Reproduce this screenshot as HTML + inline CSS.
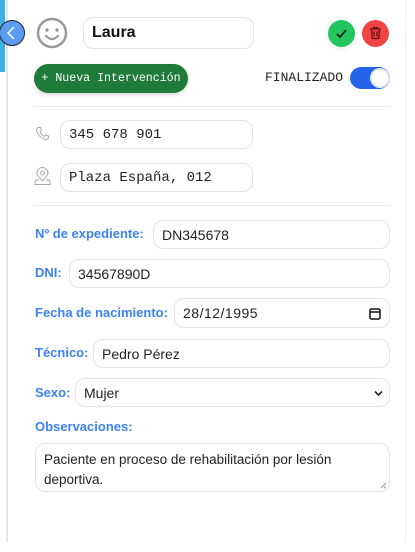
<!DOCTYPE html>
<html><head><meta charset="utf-8"><style>
*{box-sizing:border-box;margin:0;padding:0}
body{width:415px;height:552px;background:#fff;position:relative;overflow:hidden;font-family:"Liberation Sans",sans-serif}
.strip{position:absolute;left:0;top:0;width:5px;height:72px;background:#3fb0e8}
.panel{position:absolute;left:6px;top:0;width:400px;height:542px;border-left:2px solid #e6e6ea;border-right:1px solid #f0f0f3;background:#fff}
.abs{position:absolute}
.inp{position:absolute;border:1.5px solid #e3e3ea;border-radius:10px;background:#fff;font-size:14px;color:#222;padding-left:8px;display:flex;align-items:center}
.mono{font-family:"Liberation Mono",monospace}
.lbl{position:absolute;color:#3b82f6;font-weight:bold;font-size:13px;left:35px}
hr{position:absolute;left:34px;width:356px;border:0;border-top:1px solid #e5e5ea}
</style></head><body>
<div class="strip"></div>
<div class="panel"></div>
<div class="abs" style="left:-1px;top:20px;width:26px;height:26px;border-radius:50%;background:#5b9cf2;border:1.5px solid #222"></div>
<svg class="abs" style="left:4px;top:25px" width="14" height="16"><path d="M10 2 L4 8 L10 14" fill="none" stroke="#fff" stroke-width="1.5"/></svg>
<svg class="abs" style="left:36px;top:17px" width="32" height="32"><circle cx="16" cy="16" r="14" fill="none" stroke="#999" stroke-width="2.5"/><circle cx="11" cy="13" r="1.7" fill="#999"/><circle cx="21" cy="13" r="1.7" fill="#999"/><path d="M10 19 Q16 25 22 19" fill="none" stroke="#999" stroke-width="2.2" stroke-linecap="round"/></svg>
<div class="inp" style="left:83px;top:17px;width:171px;height:32px;font-weight:bold;font-size:16px;color:#111">Laura</div>
<div class="abs" style="left:328px;top:20px;width:27px;height:27px;border-radius:50%;background:#22c55e;box-shadow:0 2px 6px rgba(0,0,0,.08)"></div>
<svg class="abs" style="left:335px;top:27px" width="13" height="13"><path d="M2 7 L5 10 L11 3" fill="none" stroke="#111" stroke-width="1.6"/></svg>
<div class="abs" style="left:362px;top:20px;width:27px;height:27px;border-radius:50%;background:#ef4444"></div>
<svg class="abs" style="left:369px;top:26px" width="13" height="14"><path d="M1 3h11M4.5 3V1.5h4V3M2.5 3l.8 9.5h6.4l.8-9.5M5 5.5v5M8 5.5v5" fill="none" stroke="#6b1010" stroke-width="1.3"/></svg>
<div class="abs mono" style="left:34px;top:64px;width:154px;height:29px;border-radius:15px;background:#1e7b3a;color:#fff;font-size:11.6px;display:flex;align-items:center;justify-content:center;box-shadow:0 2px 5px rgba(0,0,0,.15);white-space:nowrap">+ Nueva Intervención</div>
<div class="abs mono" style="left:265px;top:70px;font-size:13px;color:#222">FINALIZADO</div>
<div class="abs" style="left:350px;top:67px;width:40px;height:22px;border-radius:11px;background:#2563eb"></div>
<div class="abs" style="left:370px;top:68px;width:20px;height:20px;border-radius:50%;background:#fff;border:2px solid #e0e4ee"></div>
<hr style="top:106px">
<svg class="abs" style="left:35px;top:126px" width="15" height="15"><path d="M3 1.5 L5.5 1.5 L6.5 4.5 L5 6 Q6.5 9 9 10.5 L10.5 9 L13.5 10 L13.5 12.5 Q12 14 10 13.5 Q4 11.5 1.5 5 Q1.5 2.5 3 1.5Z" fill="none" stroke="#aaa" stroke-width="1"/></svg>
<div class="inp mono" style="left:60px;top:120px;width:193px;height:29px">345 678 901</div>
<svg class="abs" style="left:34px;top:167px" width="17" height="19"><path d="M8.5 14 Q3 8.5 3 6 A5.5 5.5 0 0 1 14 6 Q14 8.5 8.5 14Z" fill="none" stroke="#aaa" stroke-width="1"/><circle cx="8.5" cy="6" r="2" fill="none" stroke="#aaa"/><path d="M5 13 H1.5 L0.8 17.5 H16.2 L15.5 13 H12" fill="none" stroke="#aaa"/></svg>
<div class="inp mono" style="left:60px;top:163px;width:193px;height:29px">Plaza España, 012</div>
<hr style="top:205px">
<div class="lbl" style="top:226px">Nº de expediente:</div>
<div class="inp" style="left:153px;top:220px;width:237px;height:29px">DN345678</div>
<div class="lbl" style="top:265px">DNI:</div>
<div class="inp" style="left:69px;top:259px;width:321px;height:29px">34567890D</div>
<div class="lbl" style="top:305px">Fecha de nacimiento:</div>
<div class="inp" style="left:174px;top:298px;width:216px;height:30px;letter-spacing:.5px">28/12/1995<svg style="position:absolute;right:8px;top:8px" width="12" height="13"><rect x="1" y="2" width="10" height="10" rx="1.5" fill="none" stroke="#111" stroke-width="1.5"/><path d="M1 5h10" stroke="#111" stroke-width="1.5"/></svg></div>
<div class="lbl" style="top:345px">Técnico:</div>
<div class="inp" style="left:93px;top:339px;width:297px;height:29px">Pedro Pérez</div>
<div class="lbl" style="top:385px">Sexo:</div>
<div class="inp" style="left:75px;top:378px;width:315px;height:29px">Mujer<svg style="position:absolute;right:6px;top:11px" width="9" height="7"><path d="M1 1.5L4.5 5L8 1.5" fill="none" stroke="#222" stroke-width="1.6"/></svg></div>
<div class="lbl" style="top:419px">Observaciones:</div>
<div class="inp" style="left:35px;top:443px;width:355px;height:49px;align-items:flex-start;padding-top:6px;line-height:20px;font-size:13.5px">Paciente en proceso de rehabilitación por lesión<br>deportiva.<svg style="position:absolute;right:2px;bottom:2px" width="7" height="7"><path d="M6 1L1 6M6 4L4 6" stroke="#999" stroke-width="1"/></svg></div>
</body></html>
